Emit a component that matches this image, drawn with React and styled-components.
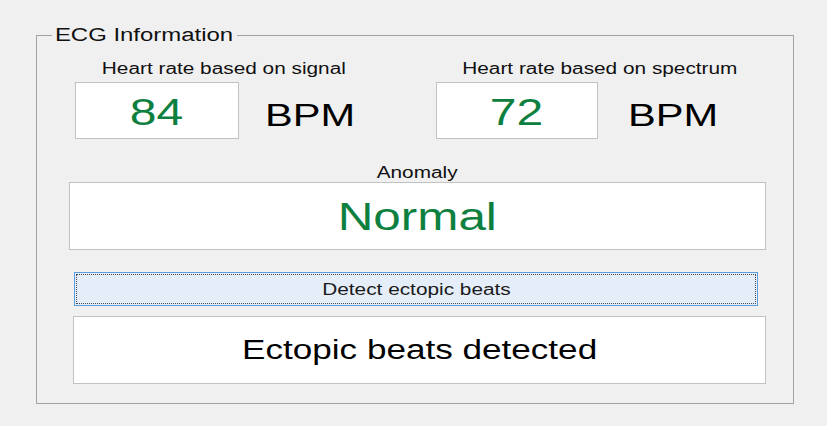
import React from "react";
import styled, { createGlobalStyle } from "styled-components";

const GlobalStyle = createGlobalStyle`
  html, body {
    margin: 0;
    padding: 0;
    background: #f0f0f0;
  }
  body {
    font-family: "Liberation Sans", Arial, sans-serif;
    color: #111;
  }
`;

const Page = styled.div`
  width: 827px;
  height: 426px;
  padding: 25px 0 0 36px;
  box-sizing: border-box;
  background: #f0f0f0;
`;

const GroupBox = styled.fieldset`
  width: 758px;
  height: 379px;
  margin: 0;
  padding: 0;
  box-sizing: border-box;
  border: 1px solid #a3a3a3;
`;

// chrome places a legend by its text-align, so centre the text with flex instead
const Title = styled.legend`
  width: 185px;
  margin: 0 0 0 15px;
  padding: 0;
  display: flex;
  justify-content: center;
  font-size: 18px;
  line-height: 20px;
  color: #111;
`;

const Body = styled.div`
  display: flex;
  flex-direction: column;
  align-items: flex-start;
`;

// the screenshot is stretched sideways, so text is widened to match
const Stretch = styled.span`
  display: inline-block;
  transform: scaleX(${(p) => p.$x || 1.3});
  transform-origin: ${(p) => p.$origin || "center"};
`;

const RateRow = styled.div`
  display: flex;
  gap: 63px;
  margin: 15px 0 0 38px;
`;

const RateColumn = styled.div`
  width: ${(p) => p.$width}px;
  display: flex;
  flex-direction: column;
`;

const Label = styled.div`
  font-size: 16px;
  line-height: 18px;
  text-align: center;
  color: #111;
`;

const ValueLine = styled.div`
  display: flex;
  align-items: center;
  margin-top: 4px;
`;

const ValueBox = styled.div`
  width: ${(p) => p.$width}px;
  height: 57px;
  box-sizing: border-box;
  padding-top: 4px;
  background: #fff;
  border: 1px solid #c2c2c2;
  display: flex;
  align-items: center;
  justify-content: center;
  font-size: 37px;
  line-height: 42px;
  color: #0d8040;
`;

const Unit = styled.div`
  margin: 8px 0 0 ${(p) => p.$gap}px;
  font-size: 32px;
  line-height: 36px;
  color: #000;
`;

const Section = styled.div`
  width: ${(p) => p.$width}px;
  margin: ${(p) => p.$top}px 0 0 ${(p) => p.$left}px;
  display: flex;
  flex-direction: column;
`;

const ResultBox = styled.div`
  width: ${(p) => p.$width}px;
  height: 68px;
  box-sizing: border-box;
  margin: ${(p) => p.$top || 0}px 0 0 ${(p) => p.$left || 0}px;
  padding-top: ${(p) => p.$pad || 0}px;
  background: #fff;
  border: 1px solid #c2c2c2;
  display: flex;
  align-items: center;
  justify-content: center;
  font-size: ${(p) => p.$size}px;
  line-height: 1.15;
  color: ${(p) => p.$color || "#000"};
`;

const ActionButton = styled.button`
  width: 684px;
  height: 34px;
  margin: 22px 0 0 37px;
  padding: 1px 0 0;
  box-sizing: border-box;
  background: #e5eef8;
  border: 1px solid #5d9ee0;
  outline: 1px dotted #4a4a4a;
  outline-offset: -3px;
  font-family: "Liberation Sans", Arial, sans-serif;
  font-size: 16px;
  line-height: 18px;
  color: #1a1a1a;
  cursor: pointer;
`;

const rates = [
  { id: "signal", label: "Heart rate based on signal", value: 84, width: 298, box: 164, gap: 26 },
  { id: "spectrum", label: "Heart rate based on spectrum", value: 72, width: 328, box: 162, gap: 30 },
];

export default function App() {
  return (
    <>
      <GlobalStyle />
      <Page>
        <GroupBox>
          <Title>
            <Stretch $x={1.33}>ECG Information</Stretch>
          </Title>

          <Body>
            <RateRow>
              {rates.map((r) => (
                <RateColumn key={r.id} $width={r.width}>
                  <Label>
                    <Stretch>{r.label}</Stretch>
                  </Label>
                  <ValueLine>
                    <ValueBox $width={r.box}>
                      <Stretch>{r.value}</Stretch>
                    </ValueBox>
                    <Unit $gap={r.gap}>
                      <Stretch $origin="left">BPM</Stretch>
                    </Unit>
                  </ValueLine>
                </RateColumn>
              ))}
            </RateRow>

            <Section $width={697} $top={25} $left={32}>
              <Label>
                <Stretch>Anomaly</Stretch>
              </Label>
              <ResultBox $width={697} $size={38} $pad={3} $color="#0d8040">
                <Stretch>Normal</Stretch>
              </ResultBox>
            </Section>

            <ActionButton>
              <Stretch>Detect ectopic beats</Stretch>
            </ActionButton>

            <ResultBox $width={693} $size={27} $top={10} $left={36} $pad={1}>
              <Stretch>Ectopic beats detected</Stretch>
            </ResultBox>
          </Body>
        </GroupBox>
      </Page>
    </>
  );
}
